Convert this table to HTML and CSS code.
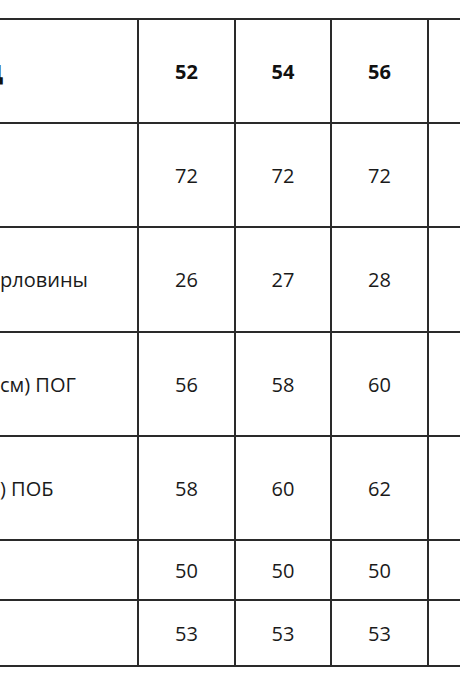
FILE: index.html
```html
<!DOCTYPE html>
<html lang="ru">
<head>
<meta charset="utf-8">
<title>Размерная сетка</title>
<link rel="stylesheet" href="styles.css">
</head>
<body>
<div class="sheet">
  <table class="sizes">
    <colgroup>
      <col class="c-name">
      <col class="c-size">
      <col class="c-size c-mid">
      <col class="c-size">
      <col class="c-more">
    </colgroup>
    <tr class="row-big">
      <th class="name"><span class="tail">Ц</span></th>
      <th>52</th>
      <th>54</th>
      <th>56</th>
      <th></th>
    </tr>
    <tr class="row-big">
      <td class="name"></td>
      <td>72</td>
      <td>72</td>
      <td>72</td>
      <td></td>
    </tr>
    <tr class="row-big row-plus">
      <td class="name">рловины</td>
      <td>26</td>
      <td>27</td>
      <td>28</td>
      <td></td>
    </tr>
    <tr class="row-big">
      <td class="name">см) ПОГ</td>
      <td>56</td>
      <td>58</td>
      <td>60</td>
      <td></td>
    </tr>
    <tr class="row-big">
      <td class="name">) ПОБ</td>
      <td>58</td>
      <td>60</td>
      <td>62</td>
      <td></td>
    </tr>
    <tr class="row-small">
      <td class="name"></td>
      <td>50</td>
      <td>50</td>
      <td>50</td>
      <td></td>
    </tr>
    <tr class="row-last">
      <td class="name"></td>
      <td>53</td>
      <td>53</td>
      <td>53</td>
      <td></td>
    </tr>
  </table>
</div>
</body>
</html>
```

FILE: styles.css
```css
html, body {
  margin: 0;
  padding: 0;
  background: #ffffff;
  overflow: hidden;
}

.sheet {
  width: 460px;
  height: 690px;
  overflow: hidden;
  padding-top: 18px;
  box-sizing: border-box;
}

.sizes {
  border-collapse: collapse;
  table-layout: fixed;
  width: 546px;
  font-family: "Open Sans", "Liberation Sans", sans-serif;
  font-size: 20px;
  color: #1a1a1a;
}

.c-name { width: 138px; }
.c-size { width: 97px; }
.c-mid { width: 96px; }
.c-more { width: 118px; }

.sizes th,
.sizes td {
  border: 2px solid #2a2a2a;
  padding: 0;
  text-align: center;
  vertical-align: middle;
  font-weight: 400;
}

.sizes th {
  font-weight: 700;
  color: #111;
}

.sizes .name {
  border-left: none;
  text-align: left;
  white-space: nowrap;
  overflow: hidden;
}

.row-big th,
.row-big td { height: 102px; }

.row-plus td { height: 103px; }

.row-small td { height: 58px; }

.row-last td { height: 64px; }

.tail {
  display: inline-block;
  font-size: 22px;
  font-weight: 700;
  margin-left: -14px;
}
```
